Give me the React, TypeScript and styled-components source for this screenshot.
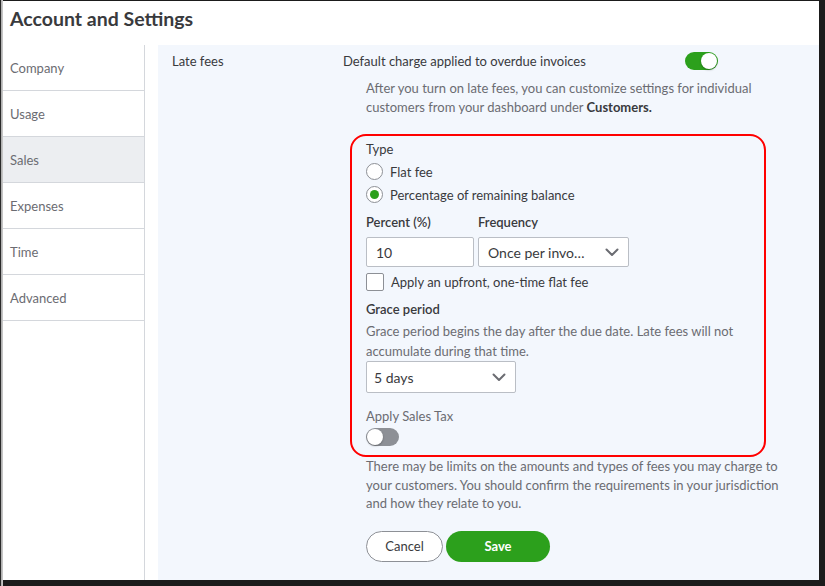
import styled, { createGlobalStyle } from 'styled-components';

const GlobalStyle = createGlobalStyle`
  html, body {
    margin: 0;
    padding: 0;
    background: #1b1b1b;
  }
  * {
    box-sizing: border-box;
  }
`;

// window frame
const Frame = styled.div`
  width: 825px;
  height: 586px;
  padding: 1px 6px 6px 0;
  background: linear-gradient(to right, #2a2a2a 0, #2a2a2a 1px, #a8a8a8 1px, #cfcfcf 3px, #1b1b1b 3px);
  font-family: Lato, 'Open Sans', sans-serif;
  color: #393a3d;
  overflow: hidden;
`;

const Window = styled.div`
  margin-left: 3px;
  height: 100%;
  background: #fff;
  display: flex;
  flex-direction: column;
`;

const Header = styled.header`
  height: 44px;
  padding: 6px 0 0 7px;
  font-size: 19.5px;
  font-weight: 700;
  color: #393a3d;
`;

const Body = styled.div`
  flex: 1;
  display: flex;
  min-height: 0;
`;

const Sidebar = styled.nav`
  width: 142px;
  border-right: 1px solid #d4d7dc;
  flex-shrink: 0;
`;

const NavItem = styled.div<{ $active?: boolean }>`
  height: 46px;
  display: flex;
  align-items: center;
  padding-left: 7px;
  font-size: 13px;
  color: #6b6c72;
  background: ${(p) => (p.$active ? '#eceef1' : '#fff')};
  border-bottom: 1px solid #d4d7dc;
`;

const Panel = styled.main`
  flex: 1;
  margin-left: 13px;
  background: #f3f7fd;
  padding-top: 6px;
  display: grid;
  grid-template-columns: 185px 1fr;
  align-content: start;
  font-size: 13px;
`;

const RowLabel = styled.div`
  padding-left: 14px;
  line-height: 20px;
`;

const Main = styled.div`
  display: flex;
  flex-direction: column;
`;

const TitleRow = styled.div`
  width: 375px;
  height: 20px;
  display: flex;
  align-items: center;
  justify-content: space-between;
`;

const Indented = styled.div`
  margin-left: 23px;
  width: 420px;
`;

const Note = styled.p<{ $lh?: number }>`
  margin: 0;
  color: #6b6c72;
  line-height: ${(p) => p.$lh ?? 19}px;
`;

const NoteLine = styled.span`
  display: block;
`;

const Strong = styled.b`
  color: #393a3d;
  font-weight: 700;
`;

const Highlight = styled.div`
  margin: 17px 0 0 -16px;
  width: 416px;
  border: 2px solid #ff0000;
  border-radius: 16px;
  padding: 1px 14px 8px;
`;

const Line = styled.div<{ $h?: number; $bold?: boolean; $muted?: boolean }>`
  height: ${(p) => p.$h ?? 23}px;
  display: flex;
  align-items: center;
  gap: 7px;
  font-weight: ${(p) => (p.$bold ? 600 : 400)};
  color: ${(p) => (p.$muted ? '#6b6c72' : '#393a3d')};
`;

const Radio = styled.span<{ $checked?: boolean }>`
  width: 17px;
  height: 17px;
  border-radius: 50%;
  border: 1px solid #8d9096;
  background: #fff;
  display: flex;
  align-items: center;
  justify-content: center;
  &::after {
    content: '';
    width: 9px;
    height: 9px;
    border-radius: 50%;
    background: ${(p) => (p.$checked ? '#2ca01c' : 'transparent')};
  }
`;

const Checkbox = styled.span`
  width: 18px;
  height: 18px;
  border: 1px solid #8d9096;
  border-radius: 2px;
  background: #fff;
`;

const FieldGrid = styled.div`
  margin-top: 7px;
  display: grid;
  grid-template-columns: 108px 151px;
  column-gap: 4px;
  row-gap: 5px;
`;

const FieldLabel = styled.div`
  line-height: 19px;
  font-weight: 600;
  color: #393a3d;
`;

const Field = styled.div<{ $w?: number; $h?: number }>`
  width: ${(p) => (p.$w ? `${p.$w}px` : 'auto')};
  height: ${(p) => p.$h ?? 30}px;
  background: #fff;
  border: 1px solid #babec5;
  border-radius: 2px;
  display: flex;
  align-items: center;
  justify-content: space-between;
  padding: 0 9px 0 9px;
  font-size: 14px;
  color: #393a3d;
`;

const Chevron = () => (
  <svg width="14" height="9" viewBox="0 0 14 9" fill="none">
    <path d="M1.5 1.5 L7 7 L12.5 1.5" stroke="#6b6c72" strokeWidth="2" strokeLinecap="round" strokeLinejoin="round" />
  </svg>
);

const Toggle = styled.span<{ $on?: boolean }>`
  position: relative;
  width: 33px;
  height: 18px;
  border-radius: 9px;
  background: ${(p) => (p.$on ? '#2ca01c' : '#8d9096')};
  display: inline-block;
  &::after {
    content: '';
    position: absolute;
    top: 1px;
    left: ${(p) => (p.$on ? '16px' : '1px')};
    width: 16px;
    height: 16px;
    border-radius: 50%;
    background: #fff;
    box-shadow: 0 1px 2px rgba(0, 0, 0, 0.3);
  }
`;

const Buttons = styled.div`
  margin-top: 18px;
  display: flex;
  gap: 3px;
`;

const Button = styled.button<{ $primary?: boolean }>`
  height: 31px;
  width: ${(p) => (p.$primary ? 104 : 77)}px;
  border-radius: 16px;
  font-family: inherit;
  font-size: 13px;
  font-weight: ${(p) => (p.$primary ? 700 : 400)};
  border: ${(p) => (p.$primary ? 'none' : '1px solid #8d9096')};
  background: ${(p) => (p.$primary ? '#2ca01c' : '#fff')};
  color: ${(p) => (p.$primary ? '#fff' : '#393a3d')};
  cursor: pointer;
`;

const navItems = ['Company', 'Usage', 'Sales', 'Expenses', 'Time', 'Advanced'];

export default function App() {
  return (
    <>
      <GlobalStyle />
      <Frame>
        <Window>
          <Header>Account and Settings</Header>
          <Body>
            <Sidebar>
              {navItems.map((item) => (
                <NavItem key={item} $active={item === 'Sales'}>
                  {item}
                </NavItem>
              ))}
            </Sidebar>
            <Panel>
              <RowLabel>Late fees</RowLabel>
              <Main>
                <TitleRow>
                  <span>Default charge applied to overdue invoices</span>
                  <Toggle $on />
                </TitleRow>
                <Indented>
                  <Note style={{ marginTop: 8 }}>
                    <NoteLine>After you turn on late fees, you can customize settings for individual</NoteLine>
                    <NoteLine>
                      customers from your dashboard under <Strong>Customers.</Strong>
                    </NoteLine>
                  </Note>
                  <Highlight>
                    <Line>Type</Line>
                    <Line>
                      <Radio />
                      Flat fee
                    </Line>
                    <Line>
                      <Radio $checked />
                      Percentage of remaining balance
                    </Line>
                    <FieldGrid>
                      <FieldLabel>Percent (%)</FieldLabel>
                      <FieldLabel>Frequency</FieldLabel>
                      <Field>10</Field>
                      <Field>
                        Once per invo…
                        <Chevron />
                      </Field>
                    </FieldGrid>
                    <Line $h={22} style={{ marginTop: 4 }}>
                      <Checkbox />
                      Apply an upfront, one-time flat fee
                    </Line>
                    <Line $h={20} $bold style={{ marginTop: 6 }}>
                      Grace period
                    </Line>
                    <Note $lh={20} style={{ marginTop: 2 }}>
                      Grace period begins the day after the due date. Late fees will not accumulate during that
                      time.
                    </Note>
                    <Field $w={150} $h={32} style={{ paddingLeft: 7 }}>
                      5 days
                      <Chevron />
                    </Field>
                    <Line $h={20} $muted style={{ marginTop: 13 }}>
                      Apply Sales Tax
                    </Line>
                    <Line $h={21}>
                      <Toggle />
                    </Line>
                  </Highlight>
                  <Note $lh={18.5}>
                    There may be limits on the amounts and types of fees you may charge to your customers. You should
                    confirm the requirements in your jurisdiction and how they relate to you.
                  </Note>
                  <Buttons>
                    <Button>Cancel</Button>
                    <Button $primary>Save</Button>
                  </Buttons>
                </Indented>
              </Main>
            </Panel>
          </Body>
        </Window>
      </Frame>
    </>
  );
}
